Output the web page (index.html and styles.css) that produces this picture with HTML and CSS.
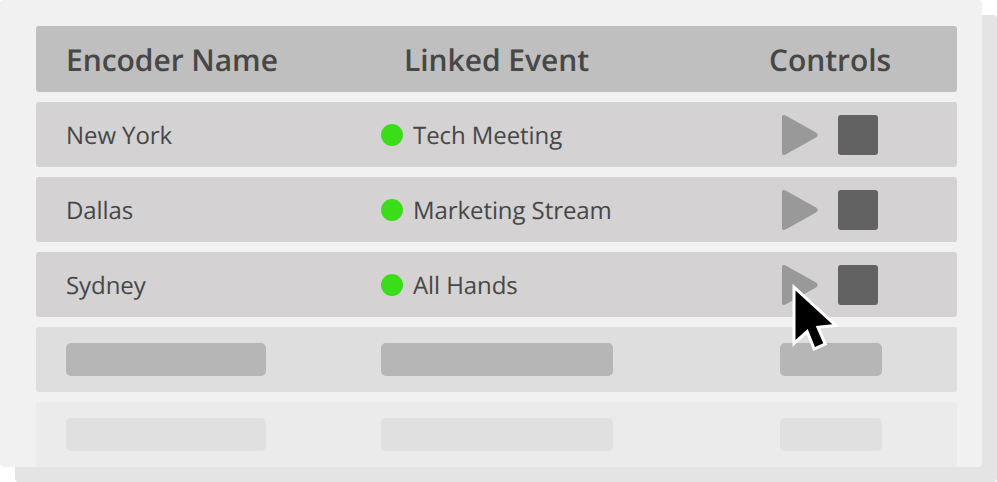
FILE: index.html
```
<!DOCTYPE html>
<html lang="en">
<head>
    <meta charset="UTF-8">
    <meta name="viewport" content="width=device-width, initial-scale=1.0">
    <title>Encoders</title>
    <link rel="stylesheet" href="styles.css">
</head>
<body>
    <div class="panel">
        <div class="row header">
            <div class="name">Encoder Name</div>
            <div class="event">Linked Event</div>
            <div class="controls">Controls</div>
        </div>

        <div class="row">
            <div class="name">New York</div>
            <div class="event"><span class="dot"></span>Tech Meeting</div>
            <div class="controls">
                <svg class="play" viewBox="0 0 36 40"><path d="M0 2Q0-1 4 .7L34 17.500Q37.500 20 34 22.500L4 39.300Q0 41 0 38Z"/></svg>
                <span class="stop"></span>
            </div>
        </div>

        <div class="row">
            <div class="name">Dallas</div>
            <div class="event"><span class="dot"></span>Marketing Stream</div>
            <div class="controls">
                <svg class="play" viewBox="0 0 36 40"><path d="M0 2Q0-1 4 .7L34 17.500Q37.500 20 34 22.500L4 39.300Q0 41 0 38Z"/></svg>
                <span class="stop"></span>
            </div>
        </div>

        <div class="row">
            <div class="name">Sydney</div>
            <div class="event"><span class="dot"></span>All Hands</div>
            <div class="controls">
                <svg class="play" viewBox="0 0 36 40"><path d="M0 2Q0-1 4 .7L34 17.500Q37.500 20 34 22.500L4 39.300Q0 41 0 38Z"/></svg>
                <span class="stop"></span>
                <svg class="cursor" viewBox="0 0 48 70"><path d="M3.500 7.500V57L15.700 46L23 64L31.300 60.300L23.700 43L40.300 41.200Z"/></svg>
            </div>
        </div>

        <div class="row empty">
            <div class="bar name-bar"></div>
            <div class="bar event-bar"></div>
            <div class="bar controls-bar"></div>
        </div>

        <div class="row empty faded">
            <div class="bar name-bar"></div>
            <div class="bar event-bar"></div>
            <div class="bar controls-bar"></div>
        </div>
    </div>
</body>
</html>
```
FILE: styles.css
```
body {
    margin: 0;
    height: 482px;
    background: #fff;
    font-family: "Open Sans", sans-serif;
    font-size: 24px;
    line-height: 36px;
    letter-spacing: -0.08px;
    color: #474747;
    text-rendering: geometricPrecision;
    overflow: hidden;
}

.panel {
    box-sizing: border-box;
    width: 982px;
    height: 467px;
    padding: 26px 25px 0 36px;
    background: #f1f1f1;
    border-radius: 4px;
    box-shadow: 15px 15px 0 #e4e4e4;
}

.row {
    display: grid;
    grid-template-columns: 315px 399px 1fr;
    align-items: center;
    box-sizing: border-box;
    height: 65px;
    margin-bottom: 10px;
    padding-left: 30px;
    background: #d4d2d2;
    border-radius: 3px;
    white-space: nowrap;
}

.name,
.event {
    padding-top: 3px;
}

.event,
.controls {
    display: flex;
    align-items: center;
}

.controls {
    position: relative;
    padding: 1px 0 0 2px;
}

.header {
    height: 66px;
    background: #bfbfbf;
    font-size: 30px;
    font-weight: 600;
    line-height: normal;
    letter-spacing: -0.05px;
}

.header .name {
    padding: 0;
}

.header .event {
    padding: 0 0 0 23px;
}

.header .controls {
    margin-left: -11px;
    padding: 0;
}

.dot {
    width: 22px;
    height: 22px;
    margin: 0 10px 2px 0;
    border-radius: 50%;
    background: #3bdd1b;
}

.play {
    width: 36px;
    height: 40px;
    fill: #999;
}

.stop {
    width: 40px;
    height: 40px;
    margin-left: 20px;
    border-radius: 3px;
    background: #626262;
}

.cursor {
    position: absolute;
    left: 12px;
    top: 19px;
    width: 48px;
    height: 70px;
    fill: #000;
    stroke: #fff;
    stroke-width: 6;
    paint-order: stroke;
    overflow: visible;
}

.bar {
    height: 33px;
    border-radius: 5px;
    background: #b6b6b6;
}

.name-bar {
    width: 200px;
}

.event-bar {
    width: 232px;
}

.controls-bar {
    width: 102px;
}

.empty {
    background: #dedede;
}

.faded {
    margin-bottom: 0;
    background: #ebebeb;
}

.faded .bar {
    background: #e0e0e0;
}
```
